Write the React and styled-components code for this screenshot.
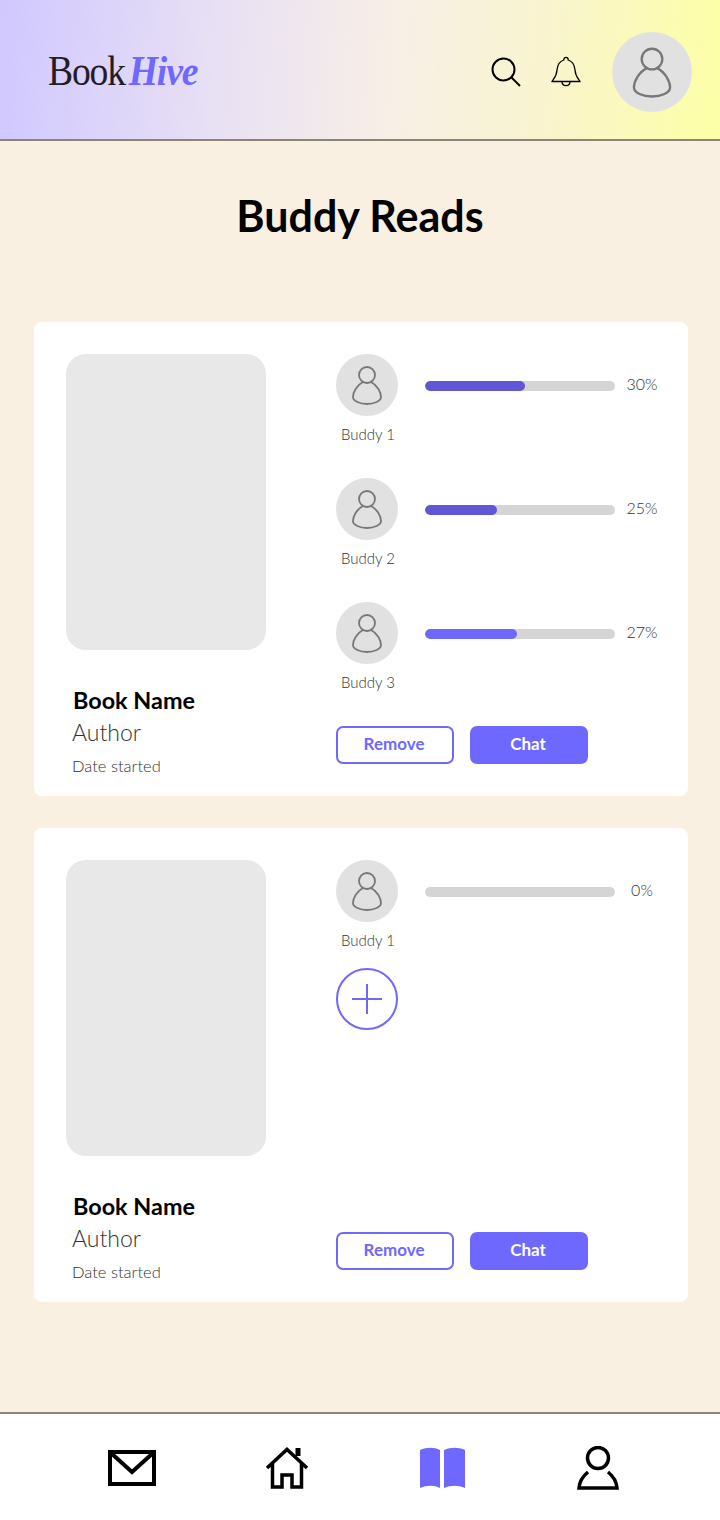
import styled, { createGlobalStyle } from "styled-components";

const GlobalStyle = createGlobalStyle`
    html, body {
        margin: 0;
        padding: 0;
        background-color: #faf0e2;
    }
    * {
        box-sizing: border-box;
    }
`;

const Page = styled.div`
    width: 720px;
    height: 1520px;
    display: flex;
    flex-direction: column;
    background-color: #faf0e2;
    font-family: "Lato", sans-serif;
    color: #333;
`;
const Header = styled.header`
    height: 141px;
    flex-shrink: 0;
    display: flex;
    align-items: center;
    justify-content: space-between;
    padding: 5px 28px 0 48px;
    border-bottom: 2px solid #8c8577;
    background: linear-gradient(94deg, #d0c8ff 0%, #e8e0f4 30%, #f8efe6 55%, #f9f4cf 75%, #fdffa6 100%);
`;
const Logo = styled.div`
    font-family: "Liberation Serif", serif;
    font-size: 40px;
    letter-spacing: -1.2px;
    color: #221d24;
    display: flex;
    gap: 4px;
    margin-bottom: 4px;
    transform: scale(0.94, 1.04);
    transform-origin: left center;
`;
const LogoAccent = styled.span`
    font-style: italic;
    font-weight: bold;
    color: #6f68ff;
`;
const HeaderIcons = styled.div`
    display: flex;
    align-items: center;
`;
const HeaderButton = styled.div`
    display: flex;
    margin-right: ${(p) => p.$space}px;
`;
const Avatar = styled.div`
    width: ${(p) => p.$size}px;
    height: ${(p) => p.$size}px;
    flex-shrink: 0;
    border-radius: 50%;
    background-color: #e1e1e1;
    display: flex;
`;
const Title = styled.h1`
    margin: 0;
    padding-top: 50px;
    height: 181px;
    flex-shrink: 0;
    text-align: center;
    font-size: 43px;
    line-height: 50px;
    font-weight: 700;
    color: #000;
`;
const Main = styled.main`
    flex: 1;
    display: flex;
    flex-direction: column;
    gap: 32px;
    padding: 0 32px 0 34px;
`;
const Card = styled.section`
    height: 474px;
    display: grid;
    grid-template-columns: 200px 1fr;
    column-gap: 70px;
    padding: 32px 32px 20px;
    border-radius: 8px;
    background-color: #fff;
`;
const BookColumn = styled.div`
    display: flex;
    flex-direction: column;
`;
const Cover = styled.div`
    width: 200px;
    height: 296px;
    border-radius: 20px;
    background-color: #e8e8e8;
`;
const BookInfo = styled.div`
    margin-top: 36px;
`;
const BookName = styled.div`
    padding-left: 7px;
    font-size: 23.4px;
    line-height: 28px;
    font-weight: 700;
    color: #000;
`;
const Author = styled.div`
    padding-left: 6px;
    margin-top: 4px;
    font-size: 23px;
    line-height: 28px;
    font-weight: 300;
    color: #333;
`;
const DateStarted = styled.div`
    padding-left: 6px;
    margin-top: 10px;
    font-size: 16.5px;
    line-height: 20px;
    font-weight: 300;
    color: #333;
`;
const BuddyColumn = styled.div`
    display: flex;
    flex-direction: column;
    justify-content: space-between;
`;
const BuddyList = styled.div`
    display: flex;
    flex-direction: column;
    gap: ${(p) => p.$gap}px;
`;
const BuddyRow = styled.div`
    height: 90px;
    display: flex;
    align-items: flex-start;
`;
const Buddy = styled.div`
    width: 62px;
    flex-shrink: 0;
    display: flex;
    flex-direction: column;
    align-items: center;
`;
const BuddyName = styled.div`
    margin-top: 8px;
    padding-left: 2px;
    font-size: 15px;
    line-height: 20px;
    font-weight: 300;
    white-space: nowrap;
    color: #333;
`;
const Progress = styled.div`
    height: 62px;
    display: flex;
    align-items: center;
    margin-left: 27px;
    padding-top: 2px;
`;
const Track = styled.div`
    width: 190px;
    height: 10px;
    border-radius: 5px;
    background-color: #d5d5d5;
    overflow: hidden;
`;
const Fill = styled.div`
    height: 100%;
    border-radius: 5px;
    background-color: ${(p) => p.$color};
`;
const Percent = styled.div`
    width: 44px;
    margin-left: 5px;
    margin-bottom: 6px;
    text-align: center;
    font-size: 16px;
    font-weight: 300;
    color: #333;
`;
const AddButton = styled.div`
    width: 62px;
    height: 62px;
    border: 2px solid #6f68ff;
    border-radius: 50%;
    display: flex;
`;
const Actions = styled.div`
    display: flex;
    gap: 16px;
    margin-bottom: 12px;
`;
const Button = styled.button`
    width: 118px;
    height: 38px;
    padding: 0 2px 4px 0;
    border: 2px solid #6f68ff;
    border-radius: 7px;
    font-family: "Lato", sans-serif;
    font-size: 17px;
    font-weight: 700;
    background-color: ${(p) => (p.$filled ? "#6f68ff" : "#fff")};
    color: ${(p) => (p.$filled ? "#fff" : "#6f68ff")};
`;
const BottomNav = styled.nav`
    height: 108px;
    flex-shrink: 0;
    display: grid;
    grid-template-columns: repeat(4, 155.500px);
    justify-content: center;
    align-items: center;
    padding: 2px 0 0 10px;
    border-top: 2px solid #8c8577;
    background-color: #fff;
`;
const NavItem = styled.div`
    display: flex;
    justify-content: center;
`;

function PersonIcon({ size }) {
    return (
        <svg width={size} height={size} viewBox="0 0 62 62" fill="none" stroke="#777" strokeWidth="1.8">
            <circle cx="31" cy="21" r="8" />
            <path d="M27 28C21 31 17 38 17 43C17 47 24 50 31 50C38 50 45 47 45 43C45 38 41 31 35 28" />
        </svg>
    );
}

function SearchIcon() {
    return (
        <svg width="30" height="30" viewBox="0 0 30 30" fill="none" stroke="#000" strokeWidth="2">
            <circle cx="12.5" cy="12.5" r="11" />
            <path d="M20.5 20.5L29 29" />
        </svg>
    );
}

function BellIcon() {
    return (
        <svg width="30" height="32" viewBox="0 0 30 32" fill="none" stroke="#000" strokeWidth="1.3">
            <path d="M1 25.500C1 24 5.500 22 6 14C6.500 8 9.500 5 12.800 4C12.800 0.500 17.200 0.500 17.200 4C20.500 5 23.500 8 24 14C24.500 22 29 24 29 25.500Z" />
            <path d="M11 25.500C11 31 19 31 19 25.500" />
        </svg>
    );
}

function PlusIcon() {
    return (
        <svg width="58" height="58" viewBox="0 0 58 58" fill="none" stroke="#6f68ff" strokeWidth="2">
            <path d="M29 14V44M14 29H44" />
        </svg>
    );
}

function MailIcon() {
    return (
        <svg width="48" height="36" viewBox="0 0 48 36" fill="none" stroke="#000" strokeWidth="4">
            <rect x="2" y="2" width="44" height="32" />
            <path d="M3 3L24 22L45 3" />
        </svg>
    );
}

function HomeIcon() {
    return (
        <svg width="44" height="42" viewBox="0 0 44 42" fill="none" stroke="#000" strokeWidth="3.500">
            <path d="M2 21L22 2.500L42 21M7.500 16V40H17V28H27V40H36.500V16" />
            <path d="M33 1V9" strokeWidth="5" />
        </svg>
    );
}

function BookIcon() {
    return (
        <svg width="45" height="42" viewBox="0 0 45 42" fill="#6f68ff">
            <path d="M0 3C7 0 14 0 20 3V41C14 38 7 38 0 41Z" />
            <path d="M24 3C31 0 38 0 45 3V41C38 38 31 38 24 41Z" />
        </svg>
    );
}

function UserIcon() {
    return (
        <svg width="42" height="44" viewBox="0 0 42 44" fill="none" stroke="#000" strokeWidth="3.500">
            <circle cx="21" cy="12" r="10.500" />
            <path d="M11 26C6 30 2.500 36 2 42H40C39.500 36 36 30 31 26" />
        </svg>
    );
}

const books = [
    {
        id: 1,
        gap: 34,
        buddies: [
            { name: "Buddy 1", percent: 30, width: 100, color: "#5f57d6" },
            { name: "Buddy 2", percent: 25, width: 72, color: "#5f57d6" },
            { name: "Buddy 3", percent: 27, width: 92, color: "#6f68ff" },
        ],
    },
    {
        id: 2,
        gap: 18,
        canAdd: true,
        buddies: [{ name: "Buddy 1", percent: 0, width: 0, color: "#6f68ff" }],
    },
];

export default function App() {
    return (
        <Page>
            <GlobalStyle />
            <Header>
                <Logo>
                    <span>Book</span>
                    <LogoAccent>Hive</LogoAccent>
                </Logo>
                <HeaderIcons>
                    <HeaderButton $space={30}><SearchIcon /></HeaderButton>
                    <HeaderButton $space={31}><BellIcon /></HeaderButton>
                    <Avatar $size={80}><PersonIcon size={80} /></Avatar>
                </HeaderIcons>
            </Header>
            <Title>Buddy Reads</Title>
            <Main>
                {books.map((book) => (
                    <Card key={book.id}>
                        <BookColumn>
                            <Cover />
                            <BookInfo>
                                <BookName>Book Name</BookName>
                                <Author>Author</Author>
                                <DateStarted>Date started</DateStarted>
                            </BookInfo>
                        </BookColumn>
                        <BuddyColumn>
                            <BuddyList $gap={book.gap}>
                                {book.buddies.map((buddy) => (
                                    <BuddyRow key={buddy.name}>
                                        <Buddy>
                                            <Avatar $size={62}><PersonIcon size={62} /></Avatar>
                                            <BuddyName>{buddy.name}</BuddyName>
                                        </Buddy>
                                        <Progress>
                                            <Track>
                                                <Fill $color={buddy.color} style={{ width: buddy.width }} />
                                            </Track>
                                            <Percent>{buddy.percent}%</Percent>
                                        </Progress>
                                    </BuddyRow>
                                ))}
                                {book.canAdd && (
                                    <AddButton><PlusIcon /></AddButton>
                                )}
                            </BuddyList>
                            <Actions>
                                <Button>Remove</Button>
                                <Button $filled>Chat</Button>
                            </Actions>
                        </BuddyColumn>
                    </Card>
                ))}
            </Main>
            <BottomNav>
                <NavItem><MailIcon /></NavItem>
                <NavItem><HomeIcon /></NavItem>
                <NavItem><BookIcon /></NavItem>
                <NavItem><UserIcon /></NavItem>
            </BottomNav>
        </Page>
    );
}
